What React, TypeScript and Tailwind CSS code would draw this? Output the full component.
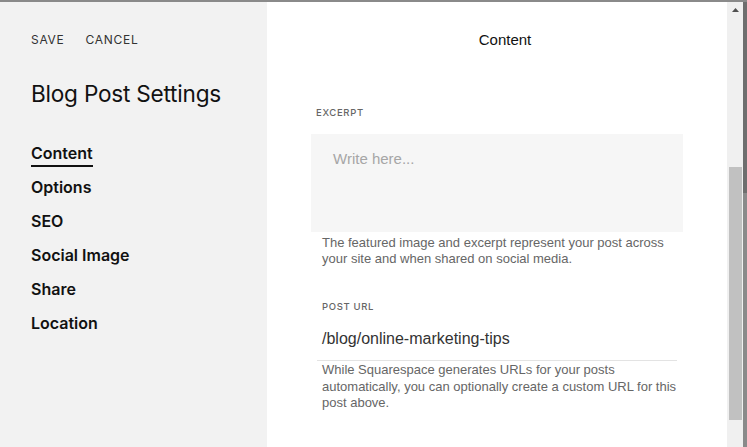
const navItems = ["Content", "Options", "SEO", "Social Image", "Share", "Location"];

export default function App() {
  return (
    <div className="w-[747px] h-[447px] flex flex-col bg-[#8a8a8a] overflow-hidden">
      <div className="h-[2px] shrink-0 bg-[#8a8a8a]" />
      <div className="flex flex-1 min-h-0">
        {/* Sidebar */}
        <aside className="w-[267px] shrink-0 bg-[#f2f2f2] pl-[31px] font-['Inter',sans-serif] text-[#111]">
          <div className="flex gap-[21px] pt-[30px] text-[12px] tracking-[0.06em] text-[#333] leading-[16px]">
            <button className="uppercase">Save</button>
            <button className="uppercase">Cancel</button>
          </div>
          <h1 className="mt-[32px] text-[22.6px] leading-[28px] tracking-[-0.01em] text-[#111]">Blog Post Settings</h1>
          <nav className="mt-[35px] flex flex-col">
            {navItems.map((item, i) => (
              <div key={item} className="h-[34px] flex items-start">
                <span
                  className={
                    i === 0
                      ? "text-[16px] font-semibold leading-[20px] border-b-2 border-[#111] pb-[2px]"
                      : "text-[16px] font-semibold leading-[20px]"
                  }
                >
                  {item}
                </span>
              </div>
            ))}
          </nav>
        </aside>

        {/* Content panel */}
        <main className="flex-1 bg-white font-['Liberation_Sans',Arial,sans-serif]">
          <h2 className="pt-[28px] pl-[16px] text-center text-[15px] leading-[20px] text-[#111]">Content</h2>
          <section className="pl-[44px] pr-[44px] mt-[56px]">
            <p className="pl-[5px] text-[9.5px] font-medium tracking-[0.07em] text-[#666] font-['Inter',sans-serif] leading-[14px]">EXCERPT</p>
            <div className="mt-[14px] h-[98px] bg-[#f6f6f6] px-[22px] pt-[15px] text-[15px] text-[#a6a6a6] leading-[20px]">
              Write here...
            </div>
            <p className="mt-[3px] pl-[11px] w-[372px] text-[13px] leading-[16px] text-[#666]">
              The featured image and excerpt represent your post across your site and when shared on social media.
            </p>
          </section>
          <section className="pl-[50px] pr-[50px] mt-[33px]">
            <p className="pl-[5px] text-[9.5px] font-medium tracking-[0.07em] text-[#666] font-['Inter',sans-serif] leading-[14px]">POST URL</p>
            <div className="mt-[15px] pl-[5px] pb-[11px] border-b border-[#e3e3e3] text-[16px] leading-[20px] text-[#333]">
              /blog/online-marketing-tips
            </div>
            <p className="mt-[1px] pl-[5px] text-[13px] leading-[16.5px] text-[#666]">
              While Squarespace generates URLs for your posts automatically, you can optionally create a custom URL for this post above.
            </p>
          </section>
        </main>

        {/* Scrollbar */}
        <div className="w-[16px] shrink-0 bg-[#f0f0f0] flex flex-col items-center">
          <div className="h-[16px] flex items-center justify-center">
            <svg width="7" height="4" viewBox="0 0 7 4"><polygon points="0,4 7,4 3.5,0" fill="#505050" /></svg>
          </div>
          <div className="mt-[149px] w-[13px] h-[253px] bg-[#c1c1c1]" />
        </div>
        <div className="w-[4px] shrink-0 flex flex-col">
          <div className="h-[191px] bg-[#6e6e6e]" />
          <div className="flex-1 bg-[#8a8a8a]" />
        </div>
      </div>
    </div>
  );
}
